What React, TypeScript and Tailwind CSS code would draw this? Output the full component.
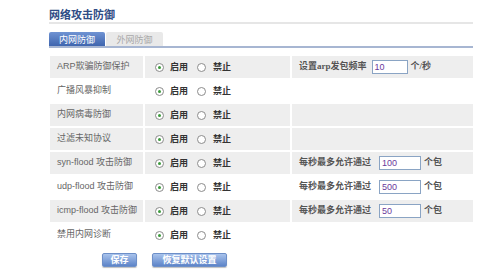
import React from 'react'

type Row = {
  label: string
  bg: boolean
  extra?: { prefix: string; value: string; unit: string; kind: 'arp' | 'pkt' }
}

const rows: Row[] = [
  { label: 'ARP欺骗防御保护', bg: true, extra: { prefix: '设置arp发包频率', value: '10', unit: '个/秒', kind: 'arp' } },
  { label: '广播风暴抑制', bg: false },
  { label: '内网病毒防御', bg: true },
  { label: '过滤未知协议', bg: true },
  { label: 'syn-flood 攻击防御', bg: true, extra: { prefix: '每秒最多允许通过', value: '100', unit: '个包', kind: 'pkt' } },
  { label: 'udp-flood 攻击防御', bg: false, extra: { prefix: '每秒最多允许通过', value: '500', unit: '个包', kind: 'pkt' } },
  { label: 'icmp-flood 攻击防御', bg: true, extra: { prefix: '每秒最多允许通过', value: '50', unit: '个包', kind: 'pkt' } },
  { label: '禁用内网诊断', bg: false },
]

const Radio = ({ checked }: { checked: boolean }) => (
  <span className="flex h-[9px] w-[9px] items-center justify-center rounded-full border border-[#8c8c8c] bg-white">
    {checked && <span className="h-[3px] w-[3px] rounded-full bg-[#3c9a3c]" />}
  </span>
)

const Button = ({ children, w }: { children: React.ReactNode; w: string }) => (
  <button
    className={`${w} h-[14px] rounded-[2px] border border-[#6d8fc8] bg-gradient-to-b from-[#a9c3ec] to-[#5d84c8] text-[9px] font-bold leading-[12px] text-white shadow-[0_1px_1px_rgba(0,0,0,0.25)]`}
  >
    {children}
  </button>
)

export default function App() {
  return (
    <div className="h-[277px] w-[494px] bg-white font-['Noto_Sans_CJK_SC',sans-serif]">
      <div className="ml-[49px] w-[424px] pt-[8px]">
        <h1 className="text-[11px] font-bold leading-[13px] text-[#2e4c85]">网络攻击防御</h1>
        <div className="mt-[1px] h-[2px] bg-[#e6e6e6]" />

        {/* tabs */}
        <div className="mt-[8px] flex border-b-2 border-[#a7b6d2]">
          <div className="flex h-[14px] w-[56px] items-center justify-center rounded-t-[2px] bg-gradient-to-b from-[#6f93d3] to-[#3f65ae] text-[9px] leading-none text-white">
            内网防御
          </div>
          <div className="ml-[1px] flex h-[14px] w-[57px] items-center justify-center rounded-t-[2px] bg-[#e9e9e9] text-[9px] leading-none text-[#a8a8a8]">
            外网防御
          </div>
        </div>

        {/* settings table */}
        <table className="-ml-[1px] mt-[6px] w-[427px] border-separate border-spacing-[2px] text-[9px]">
          <tbody>
            {rows.map((r) => {
              const cell = r.bg ? 'bg-[#eeeeee]' : ''
              return (
                <tr key={r.label} className="h-[22px]">
                  <td className={`${cell} w-[93px] pl-[7px] align-middle font-['Liberation_Sans','Noto_Sans_CJK_SC',sans-serif] text-[#666]`}>
                    {r.label}
                  </td>
                  <td className={`${cell} w-[145px] pl-[10px] align-middle`}>
                    <div className="flex items-center text-[#333]">
                      <Radio checked />
                      <span className="ml-[6px] font-bold">启用</span>
                      <span className="ml-[9px]">
                        <Radio checked={false} />
                      </span>
                      <span className="ml-[7px] font-bold">禁止</span>
                    </div>
                  </td>
                  <td className={`${cell} pl-[7px] align-middle`}>
                    {r.extra && (
                      <div className="flex items-center font-['Liberation_Serif','Noto_Sans_CJK_SC',serif] font-bold text-[#555]">
                        <span>{r.extra.prefix}</span>
                        <span
                          className={`${r.extra.kind === 'arp' ? 'ml-[5px] w-[36px]' : 'ml-[8px] w-[42px]'} h-[14px] border border-[#8aa4c4] bg-white pl-[2px] font-['Liberation_Sans',sans-serif] text-[9px] font-normal leading-[12px] text-[#6a3a9c]`}
                        >
                          {r.extra.value}
                        </span>
                        <span className="ml-[3px]">{r.extra.unit}</span>
                      </div>
                    )}
                  </td>
                </tr>
              )
            })}
          </tbody>
        </table>

        <div className="ml-[53px] mt-[5px] flex gap-[15px]">
          <Button w="w-[35px]">保存</Button>
          <Button w="w-[75px]">恢复默认设置</Button>
        </div>
      </div>
    </div>
  )
}
